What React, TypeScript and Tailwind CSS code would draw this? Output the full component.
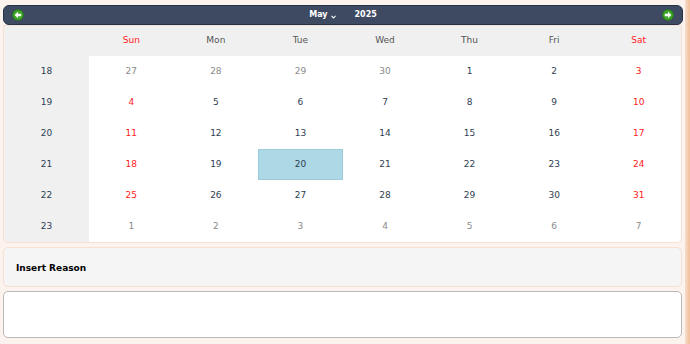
import React from "react"

type Cell = { d: number; cur: boolean }

const weeks: { wk: number; days: Cell[] }[] = [
  { wk: 18, days: [27, 28, 29, 30].map((d) => ({ d, cur: false })).concat([1, 2, 3].map((d) => ({ d, cur: true }))) },
  { wk: 19, days: [4, 5, 6, 7, 8, 9, 10].map((d) => ({ d, cur: true })) },
  { wk: 20, days: [11, 12, 13, 14, 15, 16, 17].map((d) => ({ d, cur: true })) },
  { wk: 21, days: [18, 19, 20, 21, 22, 23, 24].map((d) => ({ d, cur: true })) },
  { wk: 22, days: [25, 26, 27, 28, 29, 30, 31].map((d) => ({ d, cur: true })) },
  { wk: 23, days: [1, 2, 3, 4, 5, 6, 7].map((d) => ({ d, cur: false })) },
]

const dayNames = ["Sun", "Mon", "Tue", "Wed", "Thu", "Fri", "Sat"]

function ArrowIcon({ dir }: { dir: "left" | "right" }) {
  return (
    <svg width="12" height="12" viewBox="0 0 12 12">
      <circle cx="6" cy="6" r="5.8" fill="#2a7d18" />
      <circle cx="6" cy="6" r="4.8" fill="#3da828" />
      {dir === "left" ? (
        <path d="M2.6 6 L6 2.8 V4.8 H9.2 V7.2 H6 V9.2 Z" fill="#fff" />
      ) : (
        <path d="M9.4 6 L6 2.8 V4.8 H2.8 V7.2 H6 V9.2 Z" fill="#fff" />
      )}
    </svg>
  )
}

export default function App() {
  return (
    <div
      className="w-[690px] h-[344px] bg-[#fdf3ee] flex overflow-hidden text-[9px]"
      style={{ fontFamily: '"DejaVu Sans", Verdana, sans-serif' }}
    >
      <div className="flex-1 flex flex-col pl-[3px] pr-[2px] pt-[5px] gap-[4px]">
        {/* Month header */}
        <div className="h-[20px] -mb-[4px] rounded-[6px] border border-[#26324a] bg-[#3d4a62] flex items-center justify-between px-[8px]">
          <ArrowIcon dir="left" />
          <div className="flex items-center gap-[19px] text-white font-bold text-[8px]">
            <span className="flex items-center gap-[3px]">
              May
              <svg width="5" height="4" viewBox="0 0 5 4" className="mt-[4px]">
                <path d="M0.5 0.8 L2.5 3 L4.5 0.8" stroke="#fff" strokeWidth="1.1" fill="none" />
              </svg>
            </span>
            <span>2025</span>
          </div>
          <ArrowIcon dir="right" />
        </div>

        {/* Calendar */}
        <div className="w-[679px] border border-[#f6e0d3] rounded-b-[5px] bg-white overflow-hidden">
          <div className="grid grid-cols-[85px_repeat(7,1fr)] h-[30px] bg-[#f0f0f0] items-center text-center">
            <div />
            {dayNames.map((n, i) => (
              <div key={n} className={i === 0 || i === 6 ? "text-[#ff2020]" : "text-[#555]"}>
                {n}
              </div>
            ))}
          </div>
          {weeks.map((w) => (
            <div key={w.wk} className="grid grid-cols-[85px_repeat(7,1fr)] h-[31px] items-stretch text-center">
              <div className="bg-[#f0f0f0] flex items-center justify-center text-[#2c3e56]">{w.wk}</div>
              {w.days.map((c, i) => {
                const weekend = i === 0 || i === 6
                const sel = c.cur && c.d === 20
                const color = !c.cur ? "text-[#8a8a8a]" : weekend ? "text-[#ff1a1a]" : "text-[#2f3e52]"
                return (
                  <div
                    key={i}
                    className={`flex items-center justify-center ${color} ${
                      sel ? "bg-[#add8e6] border border-[#9ccbdb]" : ""
                    }`}
                  >
                    {c.d}
                  </div>
                )
              })}
            </div>
          ))}
        </div>

        {/* Insert Reason */}
        <div className="w-[679px] h-[40px] rounded-[5px] border border-[#f6e0d3] bg-[#f5f5f5] flex items-center px-[12px] pt-[3px]">
          <span className="font-bold text-black text-[9px]">Insert Reason</span>
        </div>

        <textarea className="w-[679px] h-[47px] rounded-[5px] border border-[#b9b9b9] bg-white resize-none outline-none" />
      </div>
      <div className="w-[5px] bg-gradient-to-r from-[#f7ddcc] to-[#efbe9c]" />
    </div>
  )
}
